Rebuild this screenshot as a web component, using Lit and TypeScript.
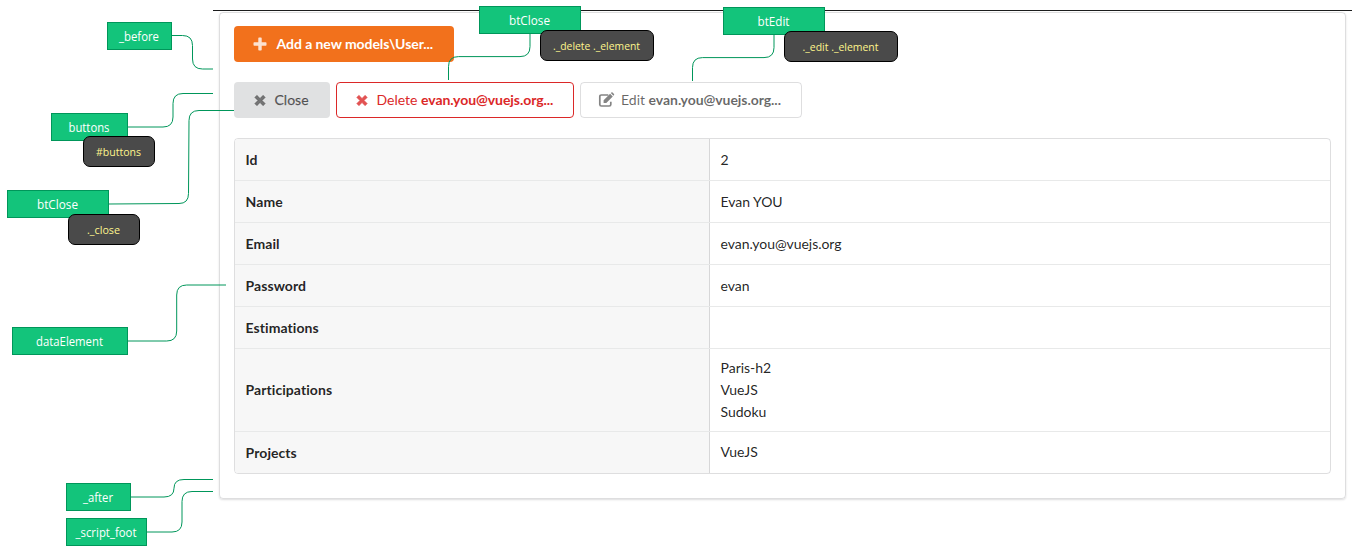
import { LitElement, html, css, svg } from "lit";
import { customElement } from "lit/decorators.js";
import { styleMap } from "lit/directives/style-map.js";

interface Tag {
  text: string;
  x: number;
  y: number;
  w: number;
  h: number;
  kind: "block" | "selector";
  tw: number;
}

const TAGS: Tag[] = [
  { text: "_before", x: 107, y: 22, w: 65, h: 28, kind: "block", tw: 40 },
  { text: "buttons", x: 51, y: 113, w: 77, h: 28, kind: "block", tw: 41 },
  { text: "btClose", x: 7, y: 190, w: 102, h: 28, kind: "block", tw: 41 },
  { text: "dataElement", x: 12, y: 327, w: 116, h: 28, kind: "block", tw: 67 },
  { text: "_after", x: 66, y: 483, w: 65, h: 28, kind: "block", tw: 30 },
  { text: "_script_foot", x: 66, y: 518, w: 81, h: 28, kind: "block", tw: 61 },
  { text: "btClose", x: 479, y: 6, w: 102, h: 28, kind: "block", tw: 41 },
  { text: "btEdit", x: 723, y: 7, w: 102, h: 28, kind: "block", tw: 32 },
  { text: "#buttons", x: 83, y: 136, w: 72, h: 31, kind: "selector", tw: 45 },
  { text: "._close", x: 68, y: 214, w: 72, h: 31, kind: "selector", tw: 33 },
  { text: "._delete ._element", x: 540, y: 30, w: 114, h: 31, kind: "selector", tw: 87 },
  { text: "._edit ._element", x: 784, y: 31, w: 114, h: 31, kind: "selector", tw: 76 },
];

const LINKS = [
  "M172 35.5H182.5Q192.5 35.5 192.5 45.5V59Q192.5 69 202.5 69H213",
  "M128 127H163Q173 127 173 117V103.5Q173 93.5 183 93.5H213",
  "M109 204L179 203.5Q188.5 203.5 188.5 193.5L189 120.5Q189 110.5 199 110.5H234",
  "M128 341H166.7Q176.7 341 176.7 331V295Q176.7 285 186.7 285H226",
  "M131 497H164Q174 497 174 488.2T184 479.5H213",
  "M147 532H172Q182 532 182 522V501.5Q182 491.5 192 491.5H213",
  "M530 34V46.6Q530 56.6 520 56.6H458.5Q448.5 56.6 448.5 66.6V80",
  "M774 35V47.6Q774 57.6 764 57.6H702.5Q692.5 57.6 692.5 67.6V81",
];

const ROWS: [string, string[]][] = [
  ["Id", ["2"]],
  ["Name", ["Evan YOU"]],
  ["Email", ["evan.you@vuejs.org"]],
  ["Password", ["evan"]],
  ["Estimations", []],
  ["Participations", ["Paris-h2", "VueJS", "Sudoku"]],
  ["Projects", ["VueJS"]],
];

const cross = svg`<path d="M2.9 1.3L6 4.4L9.1 1.3L11.2 3.4L8.1 6.5L11.2 9.6L9.1 11.7L6 8.6L2.9 11.7L.8 9.6L3.9 6.5L.8 3.4Z" stroke="currentColor" stroke-width=".6" stroke-linejoin="round"/>`;

@customElement("app-root")
export class AppRoot extends LitElement {
  static styles = css`
    :host {
      display: block;
      position: relative;
      box-sizing: border-box;
      width: 1356px;
      height: 557px;
      overflow: hidden;
      padding: 10px 4px 0 213px;
      background: #fff;
      font: 14px/20px Lato, "Liberation Sans", sans-serif;
      color: rgba(0, 0, 0, 0.87);
    }
    .page {
      border-top: 1px solid #1b1c1d;
      padding: 1px 6px 0;
    }
    .segment {
      box-sizing: border-box;
      width: 1127px;
      height: 487px;
      padding: 13px 14px;
      border: 1px solid rgba(34, 36, 38, 0.15);
      border-radius: 4px;
      box-shadow: 0 1px 2px rgba(34, 36, 38, 0.15);
    }
    .actions {
      display: flex;
      gap: 6px;
      margin: 20px 0;
    }
    .button {
      display: flex;
      align-items: center;
      box-sizing: border-box;
      height: 36px;
      padding: 0 20px 0 19px;
      border: 1px solid transparent;
      border-radius: 4px;
      white-space: nowrap;
    }
    .button b { letter-spacing: -0.06px; }
    .add {
      width: 220px;
      background: #f2711c;
      color: #fff;
      font-weight: 700;
      letter-spacing: -0.06px;
    }
    .close { width: 96px; background: #e0e1e2; color: rgba(0, 0, 0, 0.6); }
    .close span { -webkit-text-stroke: 0.25px currentColor; }
    .delete { width: 238px; border-color: #db2828; color: #db2828; }
    .edit {
      width: 222px;
      padding-left: 17px;
      border-color: rgba(34, 36, 38, 0.15);
      color: rgba(0, 0, 0, 0.6);
    }
    .icon {
      flex: none;
      width: 13px;
      height: 13px;
      margin-right: 7.5px;
      fill: currentColor;
      opacity: 0.8;
    }
    .add .icon { width: 14px; height: 14px; margin: 0 9.5px 0 -1px; }
    .edit .icon { width: 17px; height: 16px; margin-right: 6px; }
    .data {
      box-sizing: border-box;
      width: 1097px;
      border: 1px solid rgba(34, 36, 38, 0.15);
      border-radius: 4px;
      overflow: hidden;
    }
    .row {
      display: grid;
      grid-template-columns: 475px 1fr;
      min-height: 41px;
    }
    .row + .row { border-top: 1px solid rgba(34, 36, 38, 0.1); }
    .key, .value {
      display: flex;
      flex-direction: column;
      justify-content: center;
      padding: 8px 10.6px;
      line-height: 22px;
    }
    .row:last-child .value { padding: 7px 10.6px 9px; }
    .value { letter-spacing: -0.04px; }
    .key {
      background: #f7f7f7;
      border-right: 1px solid rgba(34, 36, 38, 0.15);
      font-weight: 700;
      letter-spacing: 0.06px;
    }
    .links {
      position: absolute;
      inset: 0;
      fill: none;
      stroke: #00965a;
    }
    .tag {
      position: absolute;
      box-sizing: border-box;
      font-family: "Open Sans", "Noto Sans", sans-serif;
    }
    .tag svg { display: block; width: 100%; height: 100%; overflow: visible; }
    .block { background: #13c47b; border: 1px solid #00965a; font-size: 12.3px; fill: #fff; }
    .selector {
      background: #4a4a4a;
      border: 1px solid #000;
      border-radius: 7px;
      font-size: 11.5px;
      fill: #fff58c;
    }
  `;

  private tag(t: Tag) {
    const at = { left: `${t.x}px`, top: `${t.y}px`, width: `${t.w}px`, height: `${t.h}px` };
    return html`<div class="tag ${t.kind}" style=${styleMap(at)}>
      <svg><text x=${(t.w - 3 - t.tw) / 2} y=${t.kind === "block" ? 18.3 : 19} textLength=${t.tw} lengthAdjust="spacingAndGlyphs">${t.text}</text></svg>
    </div>`;
  }

  render() {
    return html`
      <div class="page">
        <div class="segment">
          <div class="button add">
            <svg class="icon" viewBox="0 0 14 14"><path d="M5.3 1.2Q5.3.5 6 .5H8Q8.7.5 8.7 1.2V5.3H12.8Q13.5 5.3 13.5 6V8Q13.5 8.7 12.8 8.7H8.7V12.8Q8.7 13.5 8 13.5H6Q5.3 13.5 5.3 12.8V8.7H1.2Q.5 8.7.5 8V6Q.5 5.3 1.2 5.3H5.3Z" /></svg>
            <span>Add a new models\\User...</span>
          </div>
          <div class="actions">
            <div class="button close"><svg class="icon" viewBox="0 0 13 13">${cross}</svg><span>Close</span></div>
            <div class="button delete"><svg class="icon" viewBox="0 0 13 13">${cross}</svg><span>Delete <b>evan.you@vuejs.org...</b></span></div>
            <div class="button edit">
              <svg class="icon" viewBox="0 0 17 16"><path d="M10.3 3H3.4Q1.8 3 1.8 4.6V12.4Q1.8 14 3.4 14H11.2Q12.8 14 12.8 12.4V9.8" fill="none" stroke="currentColor" stroke-width="1.7"/><path d="M5.6 8.2L12.1 1.7L14.8 4.4L8.3 10.9H5.6ZM12.8 1L13.4.4Q14 0 14.6.5L16 1.9Q16.5 2.5 16 3.1L15.4 3.7Z" /></svg>
              <span>Edit <b>evan.you@vuejs.org...</b></span>
            </div>
          </div>
          <div class="data">
            ${ROWS.map(
              ([key, values]) => html`<div class="row">
                <div class="key">${key}</div>
                <div class="value">${values.map((v) => html`<span>${v}</span>`)}</div>
              </div>`
            )}
          </div>
        </div>
      </div>
      <svg class="links" width="1356" height="557">${LINKS.map((d) => svg`<path d=${d} />`)}</svg>
      ${TAGS.map((t) => this.tag(t))}
    `;
  }
}
